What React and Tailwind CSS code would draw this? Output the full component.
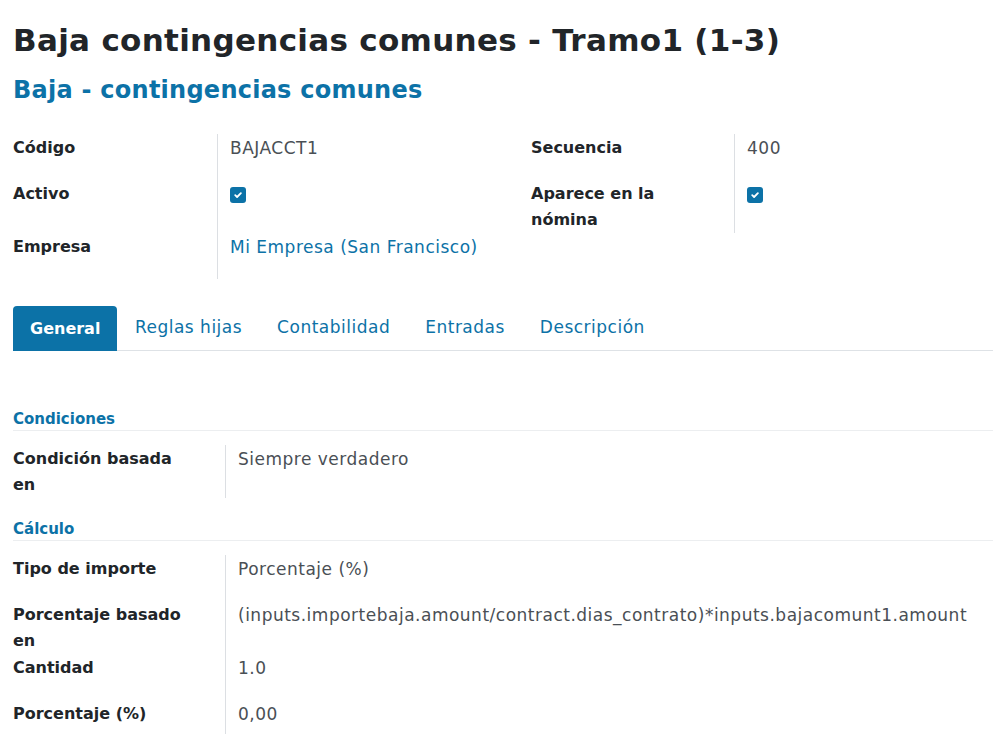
import React from 'react'

const font = { fontFamily: '"DejaVu Sans", "Open Sans", sans-serif' }

function Check() {
  return (
    <span className="mt-[4px] inline-flex h-4 w-4 items-center justify-center rounded-[3px] bg-[#0c72a7]">
      <svg width="10" height="10" viewBox="0 0 10 10" fill="none">
        <path d="M2.2 5.2 L4.1 7 L7.9 3.1" stroke="white" strokeWidth="1.8" strokeLinecap="round" strokeLinejoin="round" />
      </svg>
    </span>
  )
}

function Label({ children }) {
  return <div className="min-h-[46px] pr-3 pt-[1px] text-[16px] font-bold leading-[26px] text-[#212529]">{children}</div>
}

function Value({ children, link = false, className = '' }) {
  return (
    <div
      className={`min-h-[46px] border-l border-[#dcdfe3] pl-3 pt-[1px] text-[17px] leading-[26px] tracking-[0.5px] ${
        link ? 'text-[#0c72a7]' : 'text-[#4a4f55]'
      } ${className}`}
    >
      {children}
    </div>
  )
}

function Section({ title, first }) {
  return (
    <div className={`${first ? '' : 'mt-5'} mb-[14px] border-b border-[#eceef0] text-[15px] font-bold leading-[22px] text-[#0c72a7]`}>
      {title}
    </div>
  )
}

const tabs = ['General', 'Reglas hijas', 'Contabilidad', 'Entradas', 'Descripción']

export default function App() {
  return (
    <div className="min-h-[734px] w-[993px] overflow-hidden bg-white pl-[13px] pt-[20px]" style={font}>
      <h1 className="whitespace-nowrap text-[31px] font-bold leading-[40px] tracking-[0.3px] text-[#212529]">
        Baja contingencias comunes - Tramo1 (1-3)
      </h1>
      <h2 className="mt-[14px] text-[24px] font-bold leading-[32px] tracking-[0.25px] text-[#0c72a7]">
        Baja - contingencias comunes
      </h2>

      <div className="mt-[28px] grid grid-cols-[204px_314px_203px_1fr]">
        <Label>Código</Label>
        <Value>BAJACCT1</Value>
        <Label>Secuencia</Label>
        <Value>400</Value>

        <Label>Activo</Label>
        <Value><Check /></Value>
        <Label>Aparece en la<br />nómina</Label>
        <Value className="min-h-[53px]"><Check /></Value>

        <Label>Empresa</Label>
        <Value link>Mi Empresa (San Francisco)</Value>
        <div />
        <div />
      </div>

      <div className="mt-[27px] flex h-[45px] border-b border-[#dee2e6]">
        {tabs.map((t, i) => (
          <div
            key={t}
            className={
              i === 0
                ? '-mb-px flex items-center rounded-t-[4px] bg-[#0c72a7] px-[17px] text-[16px] font-bold text-white'
                : 'flex items-center px-[17.5px] text-[17px] tracking-[0.5px] text-[#0c72a7]'
            }
          >
            {t}
          </div>
        ))}
      </div>

      <div className="pt-[57px]">
        <Section title="Condiciones" first />
        <div className="grid grid-cols-[212px_1fr]">
          <Label>Condición basada<br />en</Label>
          <Value>Siempre verdadero</Value>
        </div>

        <Section title="Cálculo" />
        <div className="grid grid-cols-[212px_1fr]">
          <Label>Tipo de importe</Label>
          <Value>Porcentaje (%)</Value>
          <Label>Porcentaje basado<br />en</Label>
          <Value className="whitespace-nowrap">(inputs.importebaja.amount/contract.dias_contrato)*inputs.bajacomunt1.amount</Value>
          <Label>Cantidad</Label>
          <Value>1.0</Value>
          <Label>Porcentaje (%)</Label>
          <Value>0,00</Value>
        </div>
      </div>
    </div>
  )
}
